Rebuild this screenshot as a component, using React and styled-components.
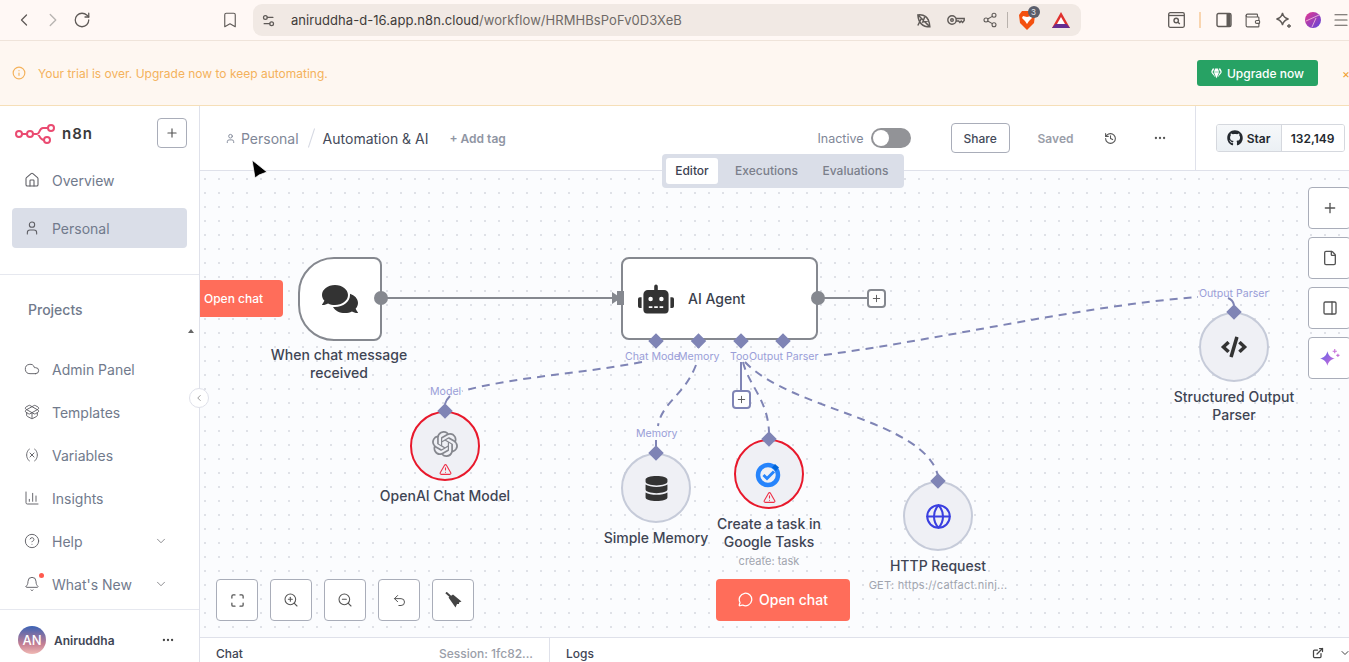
import styled, { createGlobalStyle } from "styled-components";
import {
  Bell,
  Bookmark,
  ChartColumn,
  ChevronDown,
  ChevronLeft,
  ChevronRight,
  CircleHelp,
  Cloud,
  ExternalLink,
  File,
  Globe,
  History,
  Home,
  Info,
  Maximize,
  Menu,
  MessageCircle,
  MoreHorizontal,
  PackageOpen,
  PanelRight,
  Plus,
  RotateCw,
  Settings2,
  Share2,
  TriangleAlert,
  Undo2,
  User,
  Variable,
  Wallet,
  ZoomIn,
  ZoomOut,
} from "lucide-react";
import {
  FaCode,
  FaComments,
  FaDatabase,
  FaGem,
  FaGithub,
  FaRobot,
} from "react-icons/fa";
import { SiOpenai } from "react-icons/si";

const GlobalStyle = createGlobalStyle`
  html, body {
    margin: 0;
    height: 100%;
    overflow: hidden;
    background: #fff;
    font-family: Inter, "Liberation Sans", sans-serif;
  }
  * { box-sizing: border-box; }
`;

const Page = styled.div`
  width: 1349px;
  height: 662px;
  display: flex;
  flex-direction: column;
  overflow: hidden;
  position: relative;
`;

/* browser chrome */
const BrowserBar = styled.div`
  height: 41px;
  flex: none;
  background: #fff8f5;
  border-bottom: 1px solid #efe4da;
  display: flex;
  align-items: center;
  padding: 0 0 0 14px;
  color: #5f5a57;
`;

const NavIcon = styled.span`
  width: ${(p) => p.$w || 30}px;
  margin-left: ${(p) => p.$left || 0}px;
  display: flex;
  align-items: center;
  justify-content: center;
  flex: none;
  color: ${(p) => p.$color || "#5f5a57"};
`;

const Address = styled.div`
  width: 828px;
  height: 32px;
  margin-left: 13px;
  margin-right: 83px;
  border-radius: 9px;
  background: #f1e9e4;
  display: flex;
  align-items: center;
  padding-left: 8px;
  flex: none;
`;

const Url = styled.div`
  margin-left: 15px;
  flex: 1;
  font-size: 13px;
  letter-spacing: 0.06px;
  color: #3f3b39;
  white-space: nowrap;
  span {
    color: #6f6a67;
  }
`;

const Divider = styled.span`
  width: ${(p) => p.$w || 1}px;
  height: 16px;
  background: ${(p) => p.$color || "#b9b2ad"};
  flex: none;
`;

const Badge = styled.span`
  position: absolute;
  top: -5px;
  right: -2px;
  width: 12px;
  height: 12px;
  border-radius: 50%;
  background: #5b5e6b;
  color: #e8e8ec;
  font-size: 8px;
  line-height: 12px;
  text-align: center;
`;

const BraveWrap = styled.span`
  position: relative;
  display: flex;
  width: 22px;
  justify-content: center;
`;

/* banner */
const Banner = styled.div`
  height: 65px;
  flex: none;
  background: #fef7f1;
  border-bottom: 1px solid #f6dfb8;
  display: flex;
  align-items: center;
  padding-left: 12px;
  color: #f4b25c;
  font-size: 12px;
  gap: 6px;
`;

const BannerText = styled.span`
  flex: 1;
  margin-left: 6px;
`;

const UpgradeButton = styled.button`
  width: 121px;
  height: 26px;
  border: 0;
  border-radius: 3px;
  background: #27a264;
  color: #fff;
  font: 500 12px Inter, sans-serif;
  display: flex;
  align-items: center;
  justify-content: center;
  gap: 5px;
  margin-right: 21px;
`;

const BannerClose = styled.span`
  width: 7px;
  flex: none;
  overflow: hidden;
  color: #f0a030;
  font-size: 12px;
  margin-left: -3px;
`;

/* shell */
const Body = styled.div`
  flex: 1;
  min-height: 0;
  display: flex;
`;

const Sidebar = styled.aside`
  width: 200px;
  flex: none;
  border-right: 1px solid #dfe1ea;
  display: flex;
  flex-direction: column;
  position: relative;
  background: #fff;
`;

const LogoRow = styled.div`
  height: 54px;
  display: flex;
  align-items: center;
  padding: 0 12px 0 15px;
  flex: none;
`;

const LogoText = styled.span`
  margin-left: 7px;
  font-size: 15px;
  font-weight: 600;
  letter-spacing: 1px;
  color: #3a3a3a;
  flex: 1;
`;

const SquareButton = styled.button`
  width: 30px;
  height: 30px;
  border: 1px solid #a9adb9;
  border-radius: 4px;
  background: #fff;
  color: #555;
  padding: 0;
  display: flex;
  align-items: center;
  justify-content: center;
`;

const NavList = styled.div`
  display: flex;
  flex-direction: column;
  gap: ${(p) => p.$gap}px;
  margin-top: ${(p) => p.$top || 0}px;
  flex: none;
`;

const NavItem = styled.div`
  height: 40px;
  margin: 0 12px;
  padding: 0 12px;
  border-radius: 4px;
  background: ${(p) => (p.$active ? "#dadee8" : "transparent")};
  display: flex;
  align-items: center;
  gap: 12px;
  font-size: 14px;
  color: #717a8c;
  position: relative;
  svg {
    flex: none;
    color: #5e5e64;
  }
  span {
    flex: 1;
  }
`;

const MoreChevron = styled(ChevronDown)`
  margin-right: 7px;
`;

const NotifyDot = styled.i`
  position: absolute;
  left: 27px;
  top: 9px;
  width: 5px;
  height: 5px;
  border-radius: 50%;
  background: #ff5a4f;
`;

const SideRule = styled.div`
  height: 1px;
  background: #e6e8ef;
  flex: none;
  margin-top: ${(p) => p.$top}px;
`;

const ProjectsTitle = styled.div`
  margin: 26px 0 0 28px;
  height: 18px;
  line-height: 18px;
  font-size: 14px;
  font-weight: 500;
  color: #717a8c;
  flex: none;
`;

const Caret = styled.i`
  position: absolute;
  left: 188px;
  top: 220px;
  border: 3px solid transparent;
  border-bottom: 4px solid #666;
`;

const Collapse = styled.div`
  position: absolute;
  right: -10px;
  top: 282px;
  width: 20px;
  height: 20px;
  border-radius: 50%;
  background: #fff;
  border: 1px solid #dfe1ea;
  color: #888;
  display: flex;
  align-items: center;
  justify-content: center;
  z-index: 4;
`;

const UserRow = styled.div`
  flex: 1;
  display: flex;
  align-items: center;
  padding: 8px 24px 0 18px;
  font-size: 12px;
  font-weight: 600;
  color: #3f4656;
  gap: 8px;
  span {
    flex: 1;
  }
`;

const Avatar = styled.div`
  width: 28px;
  height: 28px;
  border-radius: 50%;
  background: linear-gradient(180deg, #3b63b5 0%, #c57f93 65%, #f0b9b4 100%);
  color: #fff;
  font-size: 13px;
  font-weight: 500;
  display: flex;
  align-items: center;
  justify-content: center;
`;

const Main = styled.main`
  flex: 1;
  min-width: 0;
  display: flex;
  flex-direction: column;
  position: relative;
`;

const Header = styled.header`
  height: 65px;
  flex: none;
  display: flex;
  align-items: center;
  border-bottom: 1px solid #dfe1ea;
  padding: 0 0 0 25px;
  background: #fff;
`;

const Crumb = styled.span`
  display: flex;
  align-items: center;
  gap: 5px;
  font-size: 14px;
  color: ${(p) => (p.$dark ? "#444a59" : "#7f8797")};
  white-space: nowrap;
`;

const Slash = styled.span`
  width: 1px;
  height: 20px;
  background: #d5d8e2;
  transform: rotate(18deg);
  margin: 0 11px 0 12px;
`;

const AddTag = styled.span`
  margin-left: 21px;
  width: 368px;
  font-size: 12px;
  font-weight: 600;
  color: #8f95a3;
`;

const InactiveLabel = styled.span`
  font-size: 12.5px;
  color: #7f8797;
  margin-right: 7px;
`;

const Toggle = styled.div`
  width: 40px;
  height: 20px;
  border-radius: 10px;
  background: #929397;
  padding: 2px;
  margin-right: 40px;
  &::before {
    content: "";
    display: block;
    width: 16px;
    height: 16px;
    border-radius: 50%;
    background: #fff;
  }
`;

const ShareButton = styled.button`
  width: 59px;
  height: 30px;
  border: 1px solid #a9adb9;
  border-radius: 4px;
  background: #fff;
  color: #444a59;
  font: 500 12px Inter, sans-serif;
  padding: 0;
`;

const Saved = styled.span`
  font-size: 12px;
  font-weight: 600;
  color: #9a9ea9;
  margin-left: 28px;
  margin-right: 29px;
  width: 37px;
`;

const HeaderIcon = styled.span`
  display: flex;
  color: #555;
  margin-right: ${(p) => p.$right}px;
`;

const HeaderRule = styled.div`
  width: 1px;
  height: 64px;
  background: #dfe1ea;
  margin-right: 20px;
`;

const GitHubButton = styled.div`
  width: 129px;
  height: 28px;
  display: flex;
  border: 1px solid #d5d8de;
  border-radius: 3px;
  font-size: 12px;
  font-weight: 600;
  color: #24292f;
  overflow: hidden;
`;

const StarPart = styled.div`
  width: 65px;
  background: linear-gradient(180deg, #f6f8fa, #ebf0f4);
  border-right: 1px solid #d5d8de;
  display: flex;
  align-items: center;
  justify-content: center;
  gap: 4px;
`;

const CountPart = styled.div`
  flex: 1;
  display: flex;
  align-items: center;
  justify-content: center;
  background: #fff;
`;

const Tabs = styled.div`
  position: absolute;
  left: 462px;
  top: 48px;
  width: 242px;
  height: 34px;
  border-radius: 4px;
  background: #dadee8;
  padding: 4px;
  display: flex;
  align-items: center;
  font-size: 12px;
  font-weight: 500;
  color: #7b7f8b;
  z-index: 3;
`;

const Tab = styled.div`
  height: 26px;
  width: ${(p) => p.$w}px;
  padding-bottom: 2px;
  border-radius: 3px;
  display: flex;
  align-items: center;
  justify-content: center;
  background: ${(p) => (p.$active ? "#fff" : "transparent")};
  color: ${(p) => (p.$active ? "#3c4252" : "#7b7f8b")};
`;

/* canvas */
const Canvas = styled.div`
  flex: 1;
  min-height: 0;
  position: relative;
  overflow: hidden;
  background-color: #fbfcfe;
  background-image: radial-gradient(circle at 1px 1px, #cfd2da 0.6px, transparent 0.9px);
  background-size: 14px 14px;
  background-position: 4px 7px;
`;

const Edges = styled.svg`
  position: absolute;
  inset: 0;
  width: 100%;
  height: 100%;
`;

const ToolColumn = styled.div`
  position: absolute;
  right: -2px;
  top: 16px;
  display: flex;
  flex-direction: column;
  gap: 8px;
`;

const ToolRow = styled.div`
  position: absolute;
  left: 16px;
  bottom: 16px;
  display: flex;
  gap: 12px;
`;

const ToolButton = styled.button`
  width: ${(p) => p.$w || 42}px;
  height: 42px;
  border: 1px solid #a9adb9;
  border-radius: 4px;
  background: #fff;
  color: #555;
  display: flex;
  align-items: center;
  justify-content: center;
  padding: 0;
`;

const OpenChatSide = styled.div`
  position: absolute;
  left: 0;
  top: 109px;
  width: 83px;
  height: 37px;
  background: #ff6d5a;
  border-radius: 0 4px 4px 0;
  color: #fff;
  font-size: 12px;
  font-weight: 500;
  line-height: 37px;
  padding-left: 4px;
`;

const OpenChatButton = styled.button`
  position: absolute;
  left: 516px;
  top: 408px;
  width: 134px;
  height: 42px;
  border: 0;
  border-radius: 4px;
  padding: 0 0 2px;
  background: #ff6d5a;
  color: #fff;
  font: 500 14px Inter, sans-serif;
  display: flex;
  align-items: center;
  justify-content: center;
  gap: 6px;
`;

const TriggerNode = styled.div`
  position: absolute;
  left: 98px;
  top: 86px;
  width: 84px;
  height: 84px;
  border: 2px solid #85888f;
  border-radius: 36px 8px 8px 36px;
  background: #fff;
  display: flex;
  align-items: center;
  justify-content: center;
  color: #333;
`;

const AgentNode = styled.div`
  position: absolute;
  left: 421px;
  top: 86px;
  width: 197px;
  height: 83px;
  border: 2px solid #85888f;
  border-radius: 8px;
  background: #fff;
  display: flex;
  align-items: center;
  padding-left: 15px;
  gap: 14px;
  font-size: 14px;
  font-weight: 500;
  color: #3a3f4d;
`;

const NodeBlock = styled.div`
  position: absolute;
  left: ${(p) => p.$x - 200}px;
  top: ${(p) => p.$y - 171}px;
  width: 190px;
  margin-left: -95px;
  display: flex;
  flex-direction: column;
  align-items: center;
`;

const Circle = styled.div`
  width: 70px;
  height: 70px;
  border-radius: 50%;
  border: 2px solid ${(p) => (p.$error ? "#e8192c" : "#c6cbd9")};
  background: #eff0f5;
  display: flex;
  flex-direction: column;
  align-items: center;
  justify-content: center;
  position: relative;
  color: #333;
`;

const WarnIcon = styled.span`
  position: absolute;
  bottom: 3px;
  display: flex;
  color: #ee2f47;
`;

const RaisedOpenAi = styled(SiOpenai)`
  margin-top: -4px;
  color: #85878e;
`;

const NodeLabel = styled.div`
  font-size: 14px;
  font-weight: 500;
  line-height: 18px;
  color: #3f4554;
  text-align: center;
  margin-top: ${(p) => p.$top ?? 6}px;
`;

const NodeSub = styled.div`
  margin-top: 3px;
  font-size: 11px;
  line-height: 15px;
  letter-spacing: ${(p) => p.$spread || 0}px;
  color: #a1a5af;
  white-space: nowrap;
`;

const PortLabel = styled.span`
  position: absolute;
  left: ${(p) => p.$x - 200}px;
  top: ${(p) => p.$y - 171}px;
  font-size: 10.6px;
  line-height: 14px;
  color: #9a9ed8;
  white-space: nowrap;
`;

const AddBox = styled.div`
  position: absolute;
  left: ${(p) => p.$x - 200}px;
  top: ${(p) => p.$y - 171}px;
  width: 19px;
  height: 19px;
  border: 2px solid ${(p) => p.$color};
  border-radius: 4px;
  background: #fff;
  color: #555;
  display: flex;
  align-items: center;
  justify-content: center;
`;

const Cursor = styled.svg`
  position: absolute;
  left: 250px;
  top: 158px;
  z-index: 6;
`;

/* bottom panel */
const BottomPanel = styled.div`
  height: 25px;
  flex: none;
  border-top: 1px solid #dfe1ea;
  background: #fff;
  display: flex;
  font-size: 12px;
  font-weight: 500;
  color: #3f4554;
`;

const ChatPane = styled.div`
  width: 350px;
  border-right: 1px solid #dfe1ea;
  display: flex;
  justify-content: space-between;
  padding: 9px 16px 0;
  line-height: 14px;
`;

const Session = styled.span`
  color: #9a9ea9;
`;

const LogsPane = styled.div`
  flex: 1;
  display: flex;
  align-items: flex-start;
  justify-content: space-between;
  padding: 9px 0 0 16px;
  line-height: 14px;
`;

const PaneIcons = styled.div`
  display: flex;
  gap: 15px;
  margin-right: -2px;
  color: #444;
`;

const N8nLogo = () => (
  <svg width="40" height="24" viewBox="0 0 40 24" fill="none" stroke="#ea4b71" strokeWidth="2">
    <circle cx="4" cy="13" r="3" />
    <circle cx="15" cy="13" r="3" />
    <circle cx="36" cy="7" r="3" />
    <circle cx="32" cy="19" r="3" />
    <path d="M7 13h5M18 13h4c3 0 2-6 6-6h5M22 13c3 0 2 6 7 6" />
  </svg>
);

const LeafOff = () => (
  <svg width="17" height="17" viewBox="0 0 24 24" fill="none" stroke="#5f5a57" strokeWidth="2">
    <path d="M4 4c8-1 16 2 17 17-9 0-16-4-17-17zM4 4l17 17M9 9l-5 10M14 6l-3 8 9-2" />
  </svg>
);

const KeyIcon = () => (
  <svg width="18" height="12" viewBox="0 0 18 12" fill="none" stroke="#5f5a57" strokeWidth="1.4">
    <circle cx="5" cy="6" r="4.2" />
    <circle cx="5" cy="6" r="1.3" />
    <path d="M9 4.5h8.2v2l-1.6 2-1.4-1.5-1.3 1.5-1.3-1.5H9" />
  </svg>
);

const BraveLogo = () => (
  <svg width="16" height="19" viewBox="0 0 16 19">
    <path d="M3 0h10l3 4-1 8-7 7-7-7L0 4z" fill="#f4500f" />
    <path d="M4 5l4 1 4-1 1 2-3 3-2 3-2-3-3-3z" fill="#fff" />
  </svg>
);

const BatLogo = () => (
  <svg width="18" height="16" viewBox="0 0 18 16">
    <path d="M9 0l9 16H0z" fill="#e0312e" />
    <path d="M0 16l3.5-4h11l3.5 4z" fill="#662d91" />
    <path d="M9 5l4 7H5z" fill="#fff" />
  </svg>
);

const TabSearchIcon = () => (
  <svg width="17" height="16" viewBox="0 0 17 16" fill="none" stroke="#5f5a57" strokeWidth="1.3">
    <rect x="0.7" y="0.7" width="15.6" height="14.6" rx="1.5" />
    <path d="M1 3.5h15" />
    <circle cx="8.2" cy="8.5" r="2.2" strokeWidth="1.4" />
    <path d="M10 10.3l1.8 1.7" strokeWidth="1.4" />
  </svg>
);

const PanelIcon = () => (
  <svg width="16" height="16" viewBox="0 0 16 16" fill="none" stroke="#5f5a57" strokeWidth="1.4">
    <rect x="1" y="1.5" width="14" height="13" rx="1.5" />
    <rect x="10.5" y="2" width="4" height="12" fill="#5f5a57" stroke="none" />
  </svg>
);

const StarBurst = () => (
  <svg width="17" height="17" viewBox="0 0 17 17" fill="none" stroke="#5f5a57" strokeWidth="1.3">
    <path d="M7.5 1c.8 3.6 2.4 5.2 6 6-3.6.8-5.2 2.4-6 6-.8-3.6-2.4-5.2-6-6 3.6-.8 5.2-2.4 6-6z" />
    <path d="M14 12v4M12 14h4" />
  </svg>
);

const ProfileDot = () => (
  <svg width="16" height="16" viewBox="0 0 16 16">
    <defs>
      <linearGradient id="profile" x1="0" y1="0" x2="1" y2="1">
        <stop offset="0" stopColor="#e7388f" />
        <stop offset="1" stopColor="#5b45dd" />
      </linearGradient>
    </defs>
    <circle cx="8" cy="8" r="8" fill="url(#profile)" />
    <path d="M1 9l13-6M7 15l4-9" stroke="#f6c7dd" strokeWidth="0.8" />
  </svg>
);

const GoogleTasks = () => (
  <svg width="28" height="28" viewBox="0 0 28 28" fill="none">
    <circle cx="13" cy="15" r="10" stroke="#2684fc" strokeWidth="4.5" />
    <path d="M8.5 15l3.5 3.5 7-7" stroke="#2684fc" strokeWidth="3" />
    <path d="M20 4l4 3.5-3 3.5-4-3.5z" fill="#0066da" />
  </svg>
);

const AiSpark = () => (
  <svg width="21" height="21" viewBox="0 0 20 20">
    <defs>
      <linearGradient id="spark" x1="0" y1="0" x2="1" y2="1">
        <stop offset="0" stopColor="#5b60e8" />
        <stop offset="1" stopColor="#d56ed8" />
      </linearGradient>
    </defs>
    <path d="M8 5c1 4 3 6 7 7-4 1-6 3-7 7-1-4-3-6-7-7 4-1 6-3 7-7z" fill="url(#spark)" transform="translate(0 -2)" />
    <path d="M15 1v4M13 3h4M18 5.5v3M16.5 7h3" stroke="#c56fd8" strokeWidth="1" />
  </svg>
);

const BroomIcon = () => (
  <svg width="17" height="16" viewBox="0 0 17 16">
    <path d="M1 .5L6 5" stroke="#444" strokeWidth="2" />
    <path d="M3.500 5.500L8 2.500l8.500 7-2.500 1v1.500h-2L10.500 15.500z" fill="#444" />
  </svg>
);

const Diamond = ({ x, y }) => (
  <rect x={x - 5.5} y={y - 5.5} width="11" height="11" fill="#7f84b5" transform={`rotate(45 ${x} ${y})`} />
);

const Dash = ({ d }) => (
  <path d={d} fill="none" stroke="#7f84b5" strokeWidth="2" strokeDasharray="8 6" />
);

const navTop = [
  { icon: Home, label: "Overview" },
  { icon: User, label: "Personal", active: true },
];

const navBottom = [
  { icon: Cloud, label: "Admin Panel" },
  { icon: PackageOpen, label: "Templates" },
  { icon: Variable, label: "Variables" },
  { icon: ChartColumn, label: "Insights" },
  { icon: CircleHelp, label: "Help", more: true },
  { icon: Bell, label: "What's New", more: true, dot: true },
];

const App = () => (
  <Page>
    <GlobalStyle />
    <BrowserBar>
      <NavIcon $w={20}><ChevronLeft size={22} strokeWidth={1.5} /></NavIcon>
      <NavIcon $w={38} $color="#b9b5b2"><ChevronRight size={22} strokeWidth={1.5} /></NavIcon>
      <NavIcon $w={20}><RotateCw size={18} strokeWidth={1.7} /></NavIcon>
      <NavIcon $w={20} $left={128}><Bookmark size={18} strokeWidth={1.5} /></NavIcon>
      <Address>
        <Settings2 size={15} color="#5f5a57" />
        <Url>
          aniruddha-d-16.app.n8n.cloud<span>/workflow/HRMHBsPoFv0D3XeB</span>
        </Url>
        <NavIcon $w={32}><LeafOff /></NavIcon>
        <NavIcon $w={34}><KeyIcon /></NavIcon>
        <NavIcon $w={34}><Share2 size={16} strokeWidth={1.6} /></NavIcon>
        <Divider />
        <NavIcon $w={37}>
          <BraveWrap>
            <BraveLogo />
            <Badge>3</Badge>
          </BraveWrap>
        </NavIcon>
        <NavIcon $w={32}><BatLogo /></NavIcon>
        <NavIcon $w={4} />
      </Address>
      <NavIcon $w={24}><TabSearchIcon /></NavIcon>
      <NavIcon $w={24}><Divider $w={2} $color="#f9d5b0" /></NavIcon>
      <NavIcon $w={24}><PanelIcon /></NavIcon>
      <NavIcon $w={32}><Wallet size={17} strokeWidth={1.6} /></NavIcon>
      <NavIcon $w={30}><StarBurst /></NavIcon>
      <NavIcon $w={30}><ProfileDot /></NavIcon>
      <NavIcon $w={26}><Menu size={18} strokeWidth={1.6} /></NavIcon>
    </BrowserBar>

    <Banner>
      <Info size={14} />
      <BannerText>Your trial is over. Upgrade now to keep automating.</BannerText>
      <UpgradeButton><FaGem size={11} />Upgrade now</UpgradeButton>
      <BannerClose>×</BannerClose>
    </Banner>

    <Body>
      <Sidebar>
        <LogoRow>
          <N8nLogo />
          <LogoText>n8n</LogoText>
          <SquareButton><Plus size={14} /></SquareButton>
        </LogoRow>
        <NavList $gap={8}>
          {navTop.map((item) => (
            <NavItem key={item.label} $active={item.active}>
              <item.icon size={16} strokeWidth={1.6} />
              <span>{item.label}</span>
            </NavItem>
          ))}
        </NavList>
        <SideRule $top={26} />
        <ProjectsTitle>Projects</ProjectsTitle>
        <Caret />
        <NavList $gap={3} $top={30}>
          {navBottom.map((item) => (
            <NavItem key={item.label}>
              <item.icon size={16} strokeWidth={1.4} />
              <span>{item.label}</span>
              {item.more && <MoreChevron size={14} strokeWidth={1.2} />}
              {item.dot && <NotifyDot />}
            </NavItem>
          ))}
        </NavList>
        <SideRule $top={5} />
        <UserRow>
          <Avatar>AN</Avatar>
          <span>Aniruddha</span>
          <MoreHorizontal size={14} color="#444" />
        </UserRow>
        <Collapse><ChevronLeft size={10} /></Collapse>
      </Sidebar>

      <Main>
        <Header>
          <Crumb>
            <User size={11} />
            Personal
          </Crumb>
          <Slash />
          <Crumb $dark>Automation &amp; AI</Crumb>
          <AddTag>+ Add tag</AddTag>
          <InactiveLabel>Inactive</InactiveLabel>
          <Toggle />
          <ShareButton>Share</ShareButton>
          <Saved>Saved</Saved>
          <HeaderIcon $right={36}><History size={13} /></HeaderIcon>
          <HeaderIcon $right={28}><MoreHorizontal size={14} /></HeaderIcon>
          <HeaderRule />
          <GitHubButton>
            <StarPart><FaGithub size={16} />Star</StarPart>
            <CountPart>132,149</CountPart>
          </GitHubButton>
        </Header>
        <Tabs>
          <Tab $active $w={52}>Editor</Tab>
          <Tab $w={97}>Executions</Tab>
          <Tab $w={81}>Evaluations</Tab>
        </Tabs>

        <Canvas>
          <Edges viewBox="200 171 1149 466">
            <path d="M381 298H612" stroke="#85888f" strokeWidth="2" />
            <path d="M612 292l9 6-9 6z" fill="#85888f" />
            <path d="M818 298H867" stroke="#85888f" strokeWidth="2" />
            <path d="M741 362V390" stroke="#7f84b5" strokeWidth="2" />
            <path d="M656 341V348M698.5 341V348M741 341V348M783 341V348" stroke="#7f84b5" strokeWidth="2" />
            <Dash d="M642 362C580 374 520 376 462 391" />
            <path d="M445 404c1-4 3-6 5-8" fill="none" stroke="#7f84b5" strokeWidth="2" />
            <Dash d="M696 365C684 396 662 402 658 426" />
            <path d="M656 446V440" stroke="#7f84b5" strokeWidth="2" />
            <Dash d="M743 362C748 384 768 400 769 432" />
            <Dash d="M745 362C790 410 925 420 938 476" />
            <Dash d="M824 355C950 338 1080 306 1198 297" />
            <path d="M1228 298c3 1 5 3 6 7" fill="none" stroke="#7f84b5" strokeWidth="2" />
          </Edges>

          <OpenChatSide>Open chat</OpenChatSide>
          <TriggerNode><FaComments size={36} /></TriggerNode>
          <NodeBlock $x={339} $y={346}>
            <NodeLabel $top={0}>When chat message<br />received</NodeLabel>
          </NodeBlock>

          <AgentNode>
            <FaRobot size={36} color="#333" />
            AI Agent
          </AgentNode>

          <Edges viewBox="200 171 1149 466">
            <circle cx="381" cy="298" r="7" fill="#85888f" />
            <circle cx="818" cy="298" r="7" fill="#85888f" />
            <rect x="617" y="291" width="7" height="14" fill="#85888f" />
            <Diamond x={656} y={341} />
            <Diamond x={698.5} y={341} />
            <Diamond x={741} y={341} />
            <Diamond x={783} y={341} />
          </Edges>

          <AddBox $x={867} $y={289} $color="#85888f"><Plus size={11} /></AddBox>
          <AddBox $x={732} $y={390} $color="#7f84b5"><Plus size={11} /></AddBox>

          <PortLabel $x={625} $y={350}>Chat Mode</PortLabel>
          <PortLabel $x={678} $y={350}>Memory</PortLabel>
          <PortLabel $x={730} $y={350}>Too</PortLabel>
          <PortLabel $x={749} $y={350}>Output Parser</PortLabel>
          <PortLabel $x={430} $y={385}>Model</PortLabel>
          <PortLabel $x={636} $y={427}>Memory</PortLabel>
          <PortLabel $x={1199} $y={287}>Output Parser</PortLabel>

          <NodeBlock $x={445} $y={411}>
            <Circle $error>
              <RaisedOpenAi size={26} />
              <WarnIcon><TriangleAlert size={13} /></WarnIcon>
            </Circle>
            <NodeLabel>OpenAI Chat Model</NodeLabel>
          </NodeBlock>

          <NodeBlock $x={656} $y={453}>
            <Circle><FaDatabase size={25} /></Circle>
            <NodeLabel>Simple Memory</NodeLabel>
          </NodeBlock>

          <NodeBlock $x={769} $y={439}>
            <Circle $error>
              <GoogleTasks />
              <WarnIcon><TriangleAlert size={13} /></WarnIcon>
            </Circle>
            <NodeLabel>Create a task in<br />Google Tasks</NodeLabel>
            <NodeSub>create: task</NodeSub>
          </NodeBlock>

          <NodeBlock $x={938} $y={481}>
            <Circle><Globe size={27} color="#3a3fe0" strokeWidth={1.8} /></Circle>
            <NodeLabel>HTTP Request</NodeLabel>
            <NodeSub $spread={0.25}>GET: https://catfact.ninj...</NodeSub>
          </NodeBlock>

          <NodeBlock $x={1234} $y={312}>
            <Circle><FaCode size={26} /></Circle>
            <NodeLabel>Structured Output<br />Parser</NodeLabel>
          </NodeBlock>

          <Edges viewBox="200 171 1149 466">
            <Diamond x={445} y={411} />
            <Diamond x={656} y={453} />
            <Diamond x={769} y={439} />
            <Diamond x={938} y={481} />
            <Diamond x={1234} y={312} />
          </Edges>

          <OpenChatButton><MessageCircle size={15} />Open chat</OpenChatButton>

          <ToolColumn>
            <ToolButton $w={43}><Plus size={16} /></ToolButton>
            <ToolButton $w={43}><File size={16} /></ToolButton>
            <ToolButton $w={43}><PanelRight size={16} /></ToolButton>
            <ToolButton $w={43}><AiSpark /></ToolButton>
          </ToolColumn>

          <ToolRow>
            <ToolButton><Maximize size={15} /></ToolButton>
            <ToolButton><ZoomIn size={16} strokeWidth={1.6} /></ToolButton>
            <ToolButton><ZoomOut size={16} strokeWidth={1.6} /></ToolButton>
            <ToolButton><Undo2 size={15} strokeWidth={1.6} /></ToolButton>
            <ToolButton><BroomIcon /></ToolButton>
          </ToolRow>
        </Canvas>

        <BottomPanel>
          <ChatPane>
            <span>Chat</span>
            <Session>Session: 1fc82...</Session>
          </ChatPane>
          <LogsPane>
            <span>Logs</span>
            <PaneIcons>
              <ExternalLink size={12} strokeWidth={2.5} />
              <ChevronDown size={12} />
            </PaneIcons>
          </LogsPane>
        </BottomPanel>
      </Main>
    </Body>

    <Cursor width="20" height="24" viewBox="0 0 20 24">
      <path d="M2 2l15 12-8 3-4 3z" fill="#000" stroke="#fff" strokeWidth="0.8" />
    </Cursor>
  </Page>
);

export default App;
